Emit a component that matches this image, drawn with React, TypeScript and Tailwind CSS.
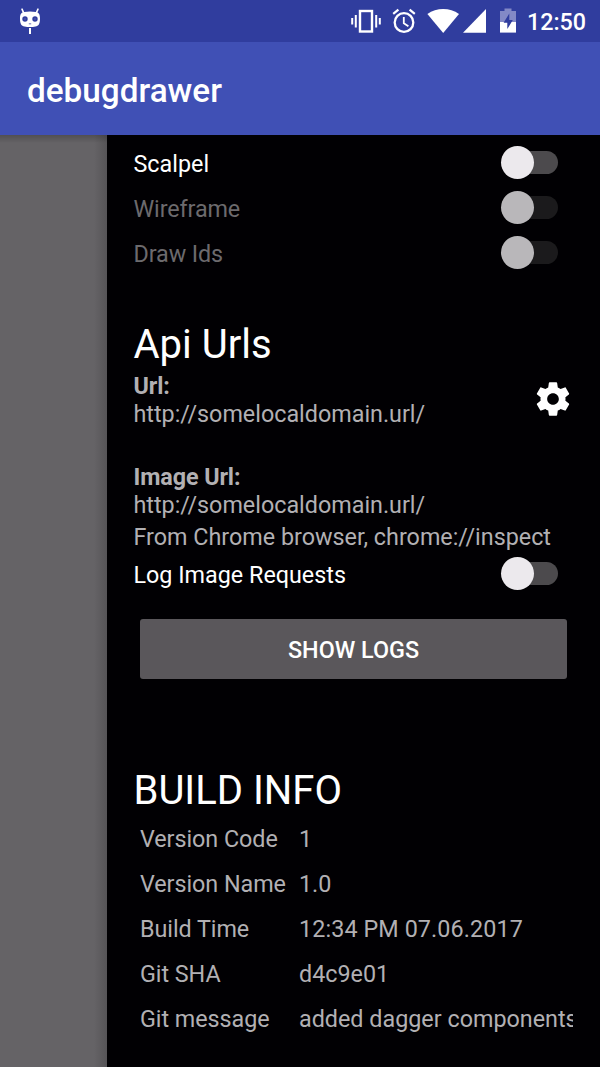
import type { ReactNode } from "react";

function CyanogenIcon() {
  return (
    <svg className="h-[27px] w-[20px]" viewBox="0 0 20 27" fill="none">
      <path d="M2 1.200l1.800 4M18 1.200l-1.800 4" stroke="#fff" strokeWidth="1.600" strokeLinecap="round" />
      <path
        fillRule="evenodd"
        fill="#fff"
        d="M4 4Q10 2.800 16 4C19 4.600 20 6.500 20 10.500C20 16 18.500 18 15.500 18.600Q10 19.600 4.500 18.600C1.500 18 0 16 0 10.500C0 6.500 1 4.600 4 4ZM5 8.300a2.700 2.700 0 1 0 0 5.400a2.700 2.700 0 0 0 0-5.400ZM15 8.300a2.700 2.700 0 1 0 0 5.400a2.700 2.700 0 0 0 0-5.400ZM8.800 15.400v.8h2.400v-.8Z"
      />
      <circle cx="5" cy="11" r=".8" fill="#5f68b4" />
      <circle cx="15" cy="11" r=".8" fill="#5f68b4" />
      <path d="M10 20v6" stroke="#fff" strokeWidth="2" />
    </svg>
  );
}

function StatusBar() {
  return (
    <div className="flex h-[42px] items-start bg-[#303d9e] text-white">
      <div className="pt-[8px] pl-[20px]">
        <CyanogenIcon />
      </div>
      <svg className="mt-[6px] ml-[310px] h-[30px] w-[32px]" viewBox="0 0 32 30" fill="none" stroke="#fff">
        <rect x="10" y="5" width="12" height="20.500" strokeWidth="2.400" />
        <path d="M5.800 9v12.500M26.200 9v12.500" strokeWidth="2" />
        <path d="M2.200 12v6.500M29.800 12v6.500" strokeWidth="2" />
      </svg>
      <svg className="mt-[8px] ml-[10px] h-[26px] w-[24px]" viewBox="0 0 24 26" fill="none" stroke="#fff">
        <circle cx="12" cy="14.500" r="9.300" strokeWidth="2.300" />
        <path d="M1.200 5.800L6.400 1.600M22.800 5.800L17.600 1.600" strokeWidth="2.200" />
        <path d="M11.800 9v6.200l4.600 3" strokeWidth="1.800" />
      </svg>
      <svg className="mt-[8px] ml-[11px] h-[26px] w-[33px]" viewBox="0 0 33 26">
        <path d="M.4 6C5 2.400 10.500 1 16.200 1S27.400 2.400 32 6L16.200 25Z" fill="#fff" />
      </svg>
      <svg className="mt-[8px] ml-[2px] h-[26px] w-[25px]" viewBox="0 0 25 26">
        <path d="M1 24.800L24 1v23.800Z" fill="#fff" />
      </svg>
      <svg className="mt-[8px] ml-[13px] h-[26px] w-[16px]" viewBox="0 0 16 26">
        <path d="M0 3h4.500V.6h7V3H16v11H0Z" fill="#8389c6" />
        <path d="M0 14h16v10.600H0Z" fill="#fff" />
        <path d="M9.300 5.500L3.600 14.800h3.700v6.300l5.500-9.100H9.300Z" fill="#303d9e" />
      </svg>
      <span className="mt-[8px] ml-[11px] text-[23.3px] leading-[28px] font-medium">12:50</span>
    </div>
  );
}

function Switch({ disabled = false }: { disabled?: boolean }) {
  return (
    <div
      className={
        disabled
          ? "flex h-[23px] w-[54px] items-center rounded-full bg-[#1b1a1c]"
          : "flex h-[23px] w-[54px] items-center rounded-full bg-[#4c4a4d]"
      }
    >
      <div
        className={
          disabled
            ? "-ml-[3.3px] h-[33.5px] w-[33.5px] shrink-0 rounded-full bg-[#b9b7ba]"
            : "-ml-[3.3px] h-[33.5px] w-[33.5px] shrink-0 rounded-full bg-[#ece9ed]"
        }
      />
    </div>
  );
}

function SwitchRow({ label, disabled = false }: { label: string; disabled?: boolean }) {
  return (
    <div className="flex h-[45px] items-center justify-between pr-[15px]">
      <span className={disabled ? "pt-[4px] tracking-[-0.1px] text-[#6c6a6d]" : "pt-[4px] text-white"}>{label}</span>
      <Switch disabled={disabled} />
    </div>
  );
}

function Heading({ children }: { children: ReactNode }) {
  return <h2 className="text-[40px] leading-[47px] text-white">{children}</h2>;
}

const buildInfo = [
  ["Version Code", "1"],
  ["Version Name", "1.0"],
  ["Build Time", "12:34 PM 07.06.2017"],
  ["Git SHA", "d4c9e01"],
  ["Git message", "added dagger components"],
];

export default function App() {
  return (
    <div className="flex h-[1067px] w-[600px] flex-col overflow-hidden bg-black font-['Roboto','Liberation_Sans',sans-serif]">
      <StatusBar />
      <header className="flex h-[93px] items-center bg-[#4050b5] pt-[4px] pl-[27px]">
        <h1 className="text-[33.3px] leading-[40px] font-medium text-white">debugdrawer</h1>
      </header>
      <div className="flex min-h-0 flex-1">
        <div className="w-[107px] shrink-0 bg-[linear-gradient(to_right,#656366_0%,#656366_88%,#565457_100%)]">
          <div className="h-[8px] bg-linear-to-b from-black/20 to-transparent" />
        </div>
        <main className="min-w-0 flex-1 bg-[#010003] pt-[5px] pr-[27px] pl-[26.5px] text-[23.33px] leading-[27px] text-[#b2b0b3]">
          <SwitchRow label="Scalpel" />
          <SwitchRow label="Wireframe" disabled />
          <SwitchRow label="Draw Ids" disabled />

          <section className="mt-[46px]">
            <Heading>Api Urls</Heading>
            <div className="mt-[5px] flex justify-between">
              <div>
                <div className="font-bold tracking-[-0.1px]">Url:</div>
                <div className="mt-[1px]">http://somelocaldomain.url/</div>
              </div>
              <svg className="mt-[6px] h-[40px] w-[40px]" viewBox="0 0 24 24" fill="#fff">
                <path d="M19.430 12.980c.040-.320.070-.640.070-.980s-.030-.660-.070-.980l2.110-1.650c.190-.150.240-.420.120-.640l-2-3.460c-.120-.220-.390-.300-.610-.220l-2.490 1c-.520-.400-1.080-.730-1.690-.980l-.380-2.650C14.460 2.180 14.250 2 14 2h-4c-.250 0-.460.180-.490.420l-.380 2.650c-.610.250-1.170.590-1.690.980l-2.490-1c-.230-.090-.490 0-.610.220l-2 3.460c-.130.220-.070.490.120.640l2.110 1.650c-.040.320-.070.650-.070.980s.030.660.070.980l-2.110 1.650c-.190.150-.240.420-.120.640l2 3.460c.120.220.390.300.610.220l2.490-1c.520.400 1.080.730 1.690.980l.380 2.650c.030.240.240.420.490.420h4c.250 0 .460-.180.490-.420l.380-2.650c.610-.250 1.170-.590 1.690-.980l2.490 1c.230.090.490 0 .610-.220l2-3.460c.120-.220.070-.490-.120-.640l-2.110-1.650zM12 15.500c-1.930 0-3.500-1.570-3.500-3.500s1.570-3.500 3.500-3.500 3.500 1.570 3.500 3.500-1.570 3.500-3.500 3.500z" />
              </svg>
            </div>
            <div className="mt-[36px] font-bold tracking-[-0.1px]">Image Url:</div>
            <div className="mt-[1px]">http://somelocaldomain.url/</div>
            <div className="mt-[5px]">From Chrome browser, chrome://inspect</div>
          </section>

          <SwitchRow label="Log Image Requests" />
          <button className="mt-[23px] ml-[6.5px] flex h-[60px] w-[427px] items-center justify-center rounded-[3px] bg-[#5a575b] pt-[2px] font-medium text-white">
            SHOW LOGS
          </button>

          <section className="mt-[88px]">
            <Heading>BUILD INFO</Heading>
            <dl className="mt-[3px] pl-[6.5px]">
              {buildInfo.map(([name, value]) => (
                <div key={name} className="flex h-[45px] items-center">
                  <dt className="w-[159px] shrink-0 tracking-[-0.05px] whitespace-nowrap">{name}</dt>
                  <dd className={/^\d+:/.test(value) ? "tracking-[0.1px] whitespace-nowrap" : "min-w-0 overflow-hidden whitespace-nowrap"}>
                    {value}
                  </dd>
                </div>
              ))}
            </dl>
          </section>
        </main>
      </div>
    </div>
  );
}
